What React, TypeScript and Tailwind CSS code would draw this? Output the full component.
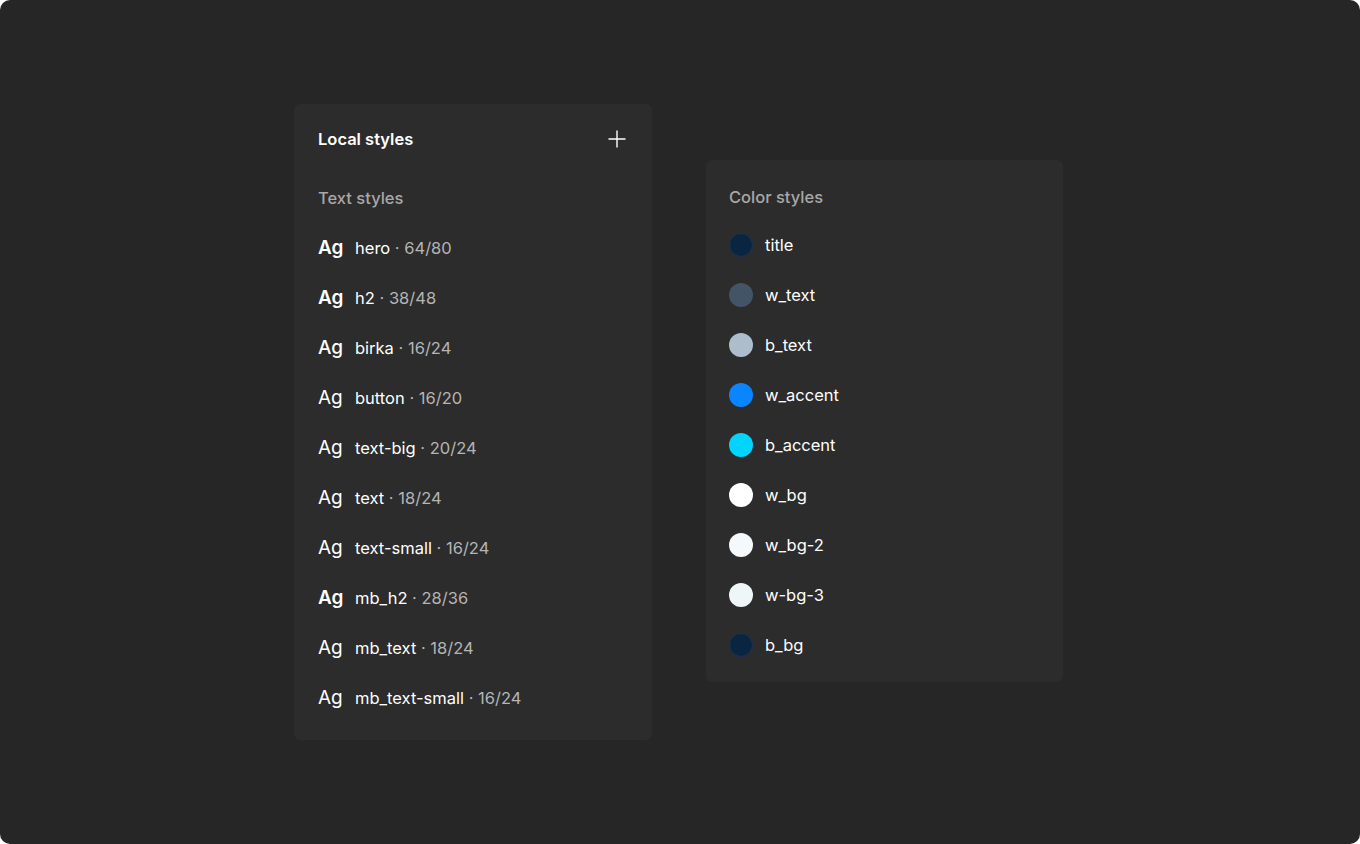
import React from "react";

const textStyles = [
    {name: "hero", meta: "64/80", weight: "font-semibold"},
    {name: "h2", meta: "38/48", weight: "font-semibold"},
    {name: "birka", meta: "16/24", weight: "font-medium"},
    {name: "button", meta: "16/20", weight: "font-normal"},
    {name: "text-big", meta: "20/24", weight: "font-normal"},
    {name: "text", meta: "18/24", weight: "font-normal"},
    {name: "text-small", meta: "16/24", weight: "font-normal"},
    {name: "mb_h2", meta: "28/36", weight: "font-semibold"},
    {name: "mb_text", meta: "18/24", weight: "font-normal"},
    {name: "mb_text-small", meta: "16/24", weight: "font-normal"},
];

const colorStyles = [
    {name: "title", color: "#0a2540", ring: true},
    {name: "w_text", color: "#425466"},
    {name: "b_text", color: "#adbdcc"},
    {name: "w_accent", color: "#0a84ff"},
    {name: "b_accent", color: "#00d4ff"},
    {name: "w_bg", color: "#ffffff"},
    {name: "w_bg-2", color: "#f6f9fc"},
    {name: "w-bg-3", color: "#eef6f8"},
    {name: "b_bg", color: "#0a2540", ring: true},
];

export default function App() {
    return (
        <div className="w-[1360px] h-[844px] bg-white" style={{fontFamily: "Inter, 'Noto Sans', sans-serif"}}>
            <div className="w-full h-full rounded-[10px] bg-[#262626] flex items-start pl-[294px] pt-[104px] gap-[54px]">
                {/* local styles panel */}
                <div className="w-[358px] rounded-md bg-[#2c2c2c] px-6 pt-6 pb-[17px]">
                    <div className="flex items-center justify-between h-[22px]">
                        <h2 className="text-white text-[16.5px] font-semibold">Local styles</h2>
                        <svg width="18" height="18" viewBox="0 0 18 18" className="mr-[2px]">
                            <path d="M9 0.5V17.5M0.5 9H17.5" stroke="#ffffff" strokeWidth="1.4" />
                        </svg>
                    </div>
                    <p className="mt-9 h-6 leading-6 text-[16.5px] font-medium text-[#a8a8a8]">Text styles</p>
                    <div className="mt-[13px] flex flex-col">
                        {textStyles.map((s) => (
                            <div key={s.name} className="h-[50px] flex items-center">
                                <div className="flex items-baseline">
                                    <span className={`w-[37px] text-[19px] text-white ${s.weight}`}>Ag</span>
                                    <span className="text-[16.5px] text-white">{s.name}</span>
                                    <span className="text-[16.5px] text-[#b5b5b5]">&nbsp;· {s.meta}</span>
                                </div>
                            </div>
                        ))}
                    </div>
                </div>

                {/* color styles panel */}
                <div className="mt-[56px] w-[357px] rounded-md bg-[#2c2c2c] px-[23px] pt-[25px] pb-3">
                    <p className="h-6 leading-6 text-[16.5px] font-medium text-[#a8a8a8]">Color styles</p>
                    <div className="mt-[11px] flex flex-col">
                        {colorStyles.map((c) => (
                            <div key={c.name} className="h-[50px] flex items-center gap-3">
                                <span
                                    className={`w-6 h-6 rounded-full ${c.ring ? "border border-[#1c3354]" : ""}`}
                                    style={{backgroundColor: c.color}}
                                />
                                <span className="text-[16.5px] text-white">{c.name}</span>
                            </div>
                        ))}
                    </div>
                </div>
            </div>
        </div>
    );
}
